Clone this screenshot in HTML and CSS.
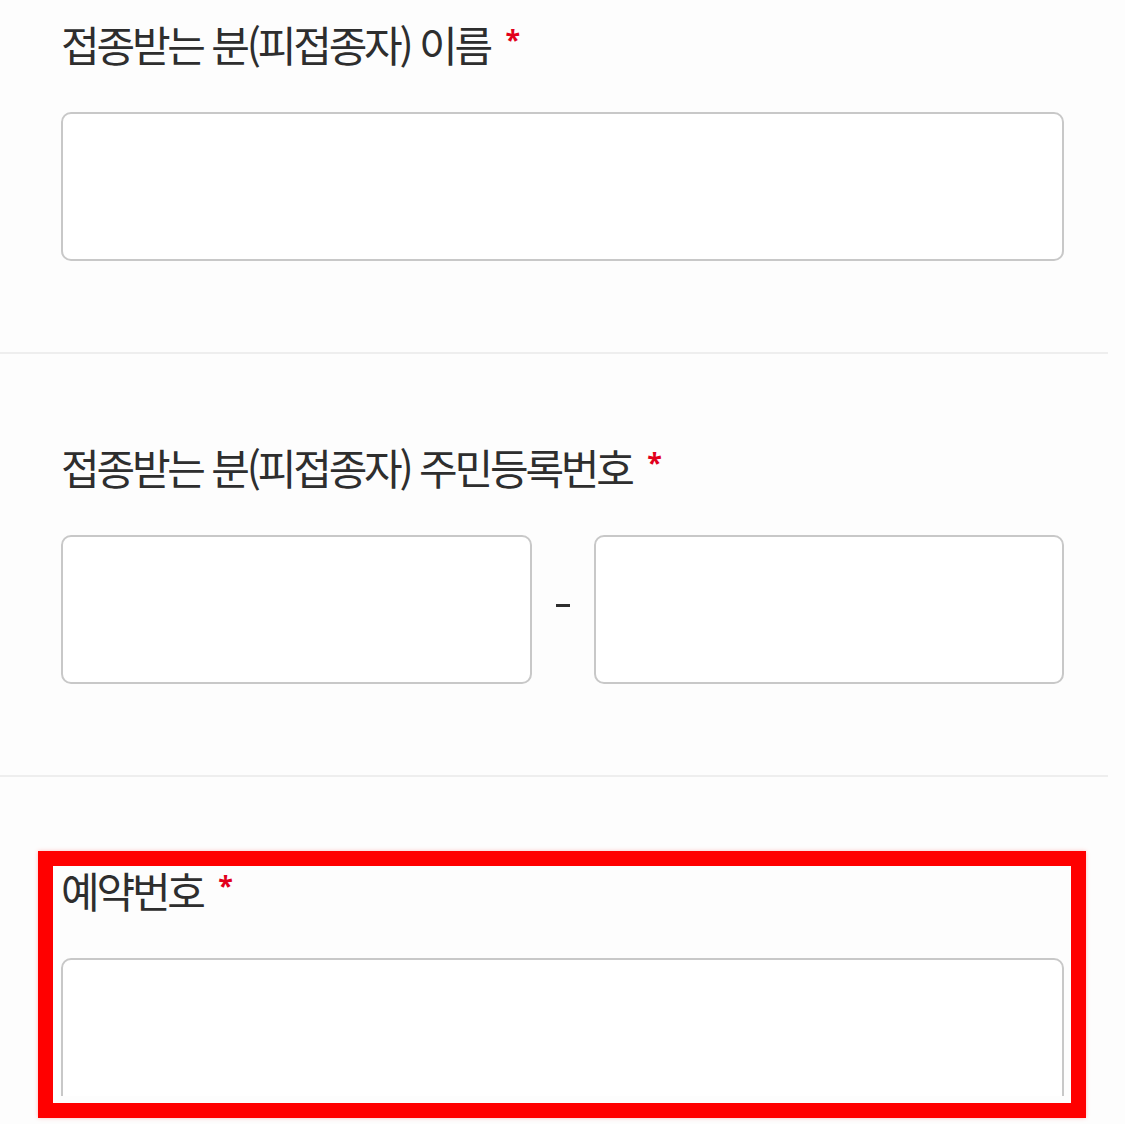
FILE: index.html
```html
<!DOCTYPE html>
<html lang="ko">
<head>
  <meta charset="UTF-8">
  <meta name="viewport" content="width=device-width, initial-scale=1.0">
  <title>예약 확인</title>
  <link rel="stylesheet" href="styles.css">
</head>
<body>
  <div class="form">
    <div class="field">
      <label class="label">접종받는 분(피접종자) 이름 <span class="req">*</span></label>
      <div class="input-box"></div>
    </div>

    <div class="field">
      <label class="label">접종받는 분(피접종자) 주민등록번호 <span class="req">*</span></label>
      <div class="id-row">
        <div class="input-box"></div>
        <div class="dash"><span></span></div>
        <div class="input-box"></div>
      </div>
    </div>

    <div class="field last">
      <label class="label">예약번호 <span class="req">*</span></label>
      <div class="input-box"></div>
    </div>

    <div class="highlight"></div>
  </div>
</body>
</html>
```

FILE: styles.css
```css
:root {
  --text: #2e2e2e;
  --required: #e2001b;
  --border: #c8c8c8;
  --divider: #eeeeee;
  --bg: #fdfdfd;
}

* {
  margin: 0;
  padding: 0;
  box-sizing: border-box;
}

body {
  font-family: 'Noto Sans CJK KR', 'Noto Sans', sans-serif;
  background: var(--bg);
  color: var(--text);
  height: 1124px;
  overflow: hidden;
}

.form {
  position: relative;
  width: 1108px;
}

.field {
  padding: 87px 44px 91px 61px;
  border-bottom: 2px solid var(--divider);
}

.field:first-child {
  padding-top: 18px;
}

.field.last {
  padding-bottom: 0;
  border-bottom: none;
}

.label {
  display: block;
  font-size: 42px;
  line-height: 52px;
  letter-spacing: -3.2px;
  margin-bottom: 42px;
}

.req {
  display: inline-block;
  vertical-align: top;
  margin-left: 7px;
  margin-top: 8px;
  font-family: 'Noto Sans', sans-serif;
  font-weight: 700;
  font-size: 27px;
  line-height: 27px;
  color: var(--required);
  letter-spacing: 0;
}

.input-box {
  height: 149px;
  background: #ffffff;
  border: 2px solid var(--border);
  border-radius: 10px;
}

.id-row {
  display: grid;
  grid-template-columns: 1fr 62px 1fr;
  align-items: center;
}

.dash {
  display: flex;
  justify-content: center;
  margin-top: -8px;
}

.dash span {
  width: 14px;
  height: 3px;
  background: var(--text);
}

/* annotation overlay */
.highlight {
  position: absolute;
  left: 38px;
  top: 851px;
  width: 1048px;
  height: 267px;
  border: 15px solid #ff0000;
  box-shadow: 0 0 4px rgba(255, 0, 0, 0.25), inset 0 -7px 0 var(--bg);
  pointer-events: none;
}
```
